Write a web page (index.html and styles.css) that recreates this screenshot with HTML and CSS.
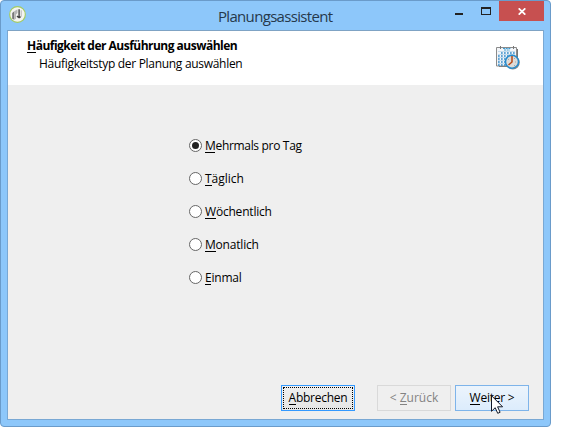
FILE: index.html
```html
<!DOCTYPE html>
<html lang="de">
<head>
<meta charset="utf-8">
<title>Planungsassistent</title>
<link rel="stylesheet" href="styles.css">
</head>
<body>
<main class="window">
  <header class="titlebar">
    <svg class="app-icon" viewBox="0 0 16 16"><circle cx="8" cy="8" r="7.4" fill="#f4f4f1" stroke="#a4cb62" stroke-width="1.1"/><path d="M3 6.500 5 5v8l-2-1z" fill="#777"/><path d="M5 5 8 3v3.500L6.500 8v4L5 13z" fill="#b5b5b5"/><path d="M9.500 3v7M7.500 9.500l2 1.500 1.500-1" fill="none" stroke="#444" stroke-width="1.300"/><path d="M11.500 4v6" stroke="#bbb"/></svg>
    <h1 class="title">Planungsassistent</h1>
    <div class="controls">
      <span class="minimize"></span>
      <span class="maximize"></span>
      <span class="close"><svg viewBox="0 0 8 7"><path d="M.7.3 7.3 6.7M7.3.3.7 6.7" stroke="#fff" stroke-width="1.7"/></svg></span>
    </div>
  </header>
  <section class="client">
    <div class="banner">
      <div class="heading">
        <h2><u>H</u>äufigkeit der Ausführung auswählen</h2>
        <p>Häufigkeitstyp der Planung auswählen</p>
      </div>
      <svg class="calendar" viewBox="0 0 24 25">
        <path d="M3 3h19v18H3z" fill="#777"/>
        <path d="M.5 1.500h20v18.500H.5z" fill="#f3f5f8" stroke="#8b8b8b"/>
        <path d="M4.500 0v3M17.500 0v3" stroke="#777"/>
        <path d="M7 2.500h8M8 4h6" stroke="#3c9bd0" stroke-dasharray="2 .7"/>
        <path d="M2 5.500h17M2 8.500h17M2 11.500h17M2 14.500h17M2 17.500h17" stroke="#c5dced"/>
        <path d="M5 7h14M2 10h17M2 13h17M2 16h17M2 19h14" stroke="#328bc9" stroke-width="1.500" stroke-dasharray="1.700 1.300"/>
        <circle cx="16.800" cy="16.500" r="7" fill="#888"/>
        <circle cx="16" cy="15.700" r="6.500" fill="#dedbd8" stroke="#278bcc" stroke-width="1.500"/>
        <path d="M16 10v6l-3.500 3" fill="none" stroke="#b84714" stroke-width="1.500"/>
        <path d="M12 13l1 1M19 12l-1 1M20 16h-1M18 19l1 1" stroke="#999" stroke-width=".8"/>
      </svg>
    </div>
    <form class="options">
      <label class="tight"><i class="radio checked"></i><span><u>M</u>ehrmals pro Tag</span></label>
      <label class="loose"><i class="radio"></i><span><u>T</u>äglich</span></label>
      <label><i class="radio"></i><span><u>W</u>öchentlich</span></label>
      <label><i class="radio"></i><span><u>M</u>onatlich</span></label>
      <label><i class="radio"></i><span><u>E</u>inmal</span></label>
    </form>
    <footer class="actions">
      <button class="cancel"><span><u>A</u>bbrechen</span></button>
      <button class="back" disabled>&lt; <u>Z</u>urück</button>
      <button class="next"><u>W</u>eiter &gt;</button>
    </footer>
  </section>
  <svg class="cursor" viewBox="0 0 12 19"><path d="M.5.7v15.600l3.700-3.600 2.500 5.600 2.400-1-2.500-5.500h5z" fill="#fff" stroke="#111827" stroke-width="1"/></svg>
</main>
</body>
</html>
```
FILE: styles.css
```css
* { box-sizing: border-box; }
body { margin: 0; background: #fff; font: 12px/16px "Open Sans", sans-serif; color: #000; }
h1, h2, p { margin: 0; font-weight: 400; }
u { text-decoration: none; display: inline-block; height: 15px; border-bottom: 1px solid currentColor; line-height: 16px; vertical-align: top; }
.window { position: relative; width: 551px; height: 427px; border: 1px solid #6a9bca; border-radius: 4px; background: #8dc7fa; padding: 0 6px 6px; }
.titlebar { height: 29px; display: flex; align-items: flex-start; }
.app-icon { width: 17px; height: 17px; margin: 5px 0 0 2px; flex: none; }
.title { margin: 4px 0 0 192px; width: 160px; font-size: 15px; line-height: 22px; color: #26394b; white-space: nowrap; letter-spacing: -.68px; }
.controls { margin-left: auto; display: flex; height: 20px; }
.minimize { width: 8px; height: 2px; background: #222; margin: 12px 18px 0 0; }
.maximize { width: 10px; height: 8px; border: 1px solid #222; border-top-width: 2px; margin: 6px 8px 0 0; }
.close { width: 45px; height: 20px; background: #c75050; display: flex; align-items: center; justify-content: center; }
.close svg { width: 8px; height: 7px; }
.client { height: 390px; border: 1px solid #79a8d4; border-top-color: #7fa3c4; background: #efefef; display: flex; flex-direction: column; }
.banner { height: 54px; background: #fff; display: flex; justify-content: space-between; padding: 7px 23px 0 19px; }
.heading { white-space: nowrap; }
.heading h2 { font-size: 12px; line-height: 16px; font-weight: 700; letter-spacing: -.51px; }
.heading p { margin: 2px 0 0 12px; letter-spacing: -.3px; }
.calendar { width: 24px; height: 25px; margin-top: 8px; }
.options { padding: 53px 0 0 181px; flex: 1; }
.options label { display: flex; align-items: flex-start; gap: 3px; height: 16px; margin-bottom: 17px; letter-spacing: -.2px; }
.options .tight { letter-spacing: -.32px; }
.options .loose { letter-spacing: 0; }
.radio { width: 13px; height: 13px; margin-top: 1px; border: 1px solid #666; border-radius: 50%; background: #fff; display: grid; place-items: center; }
.checked::after { content: ""; width: 7px; height: 7px; border-radius: 50%; background: #222; }
.actions { display: flex; justify-content: flex-end; padding: 0 14px 8px 0; }
button { width: 74px; height: 26px; padding: 0; font: inherit; letter-spacing: -.25px; color: #000; border: 1px solid #d9d9d9; background: #efefef; white-space: nowrap; }
.cancel { border-color: #3399ff; background: linear-gradient(#f0f0f0, #e5e5e5); padding: 1px; margin-right: 22px; }
.cancel span { display: block; height: 22px; line-height: 20px; border: 1px dotted #000; }
.cancel u { margin-top: 2px; }
.back { color: #838383; margin-right: 4px; letter-spacing: 0; }
.next { border-color: #7eb4ea; background: linear-gradient(#ecf4fc, #dcecfc); }
.cursor { position: absolute; left: 490px; top: 394px; width: 12px; height: 19px; }
```
